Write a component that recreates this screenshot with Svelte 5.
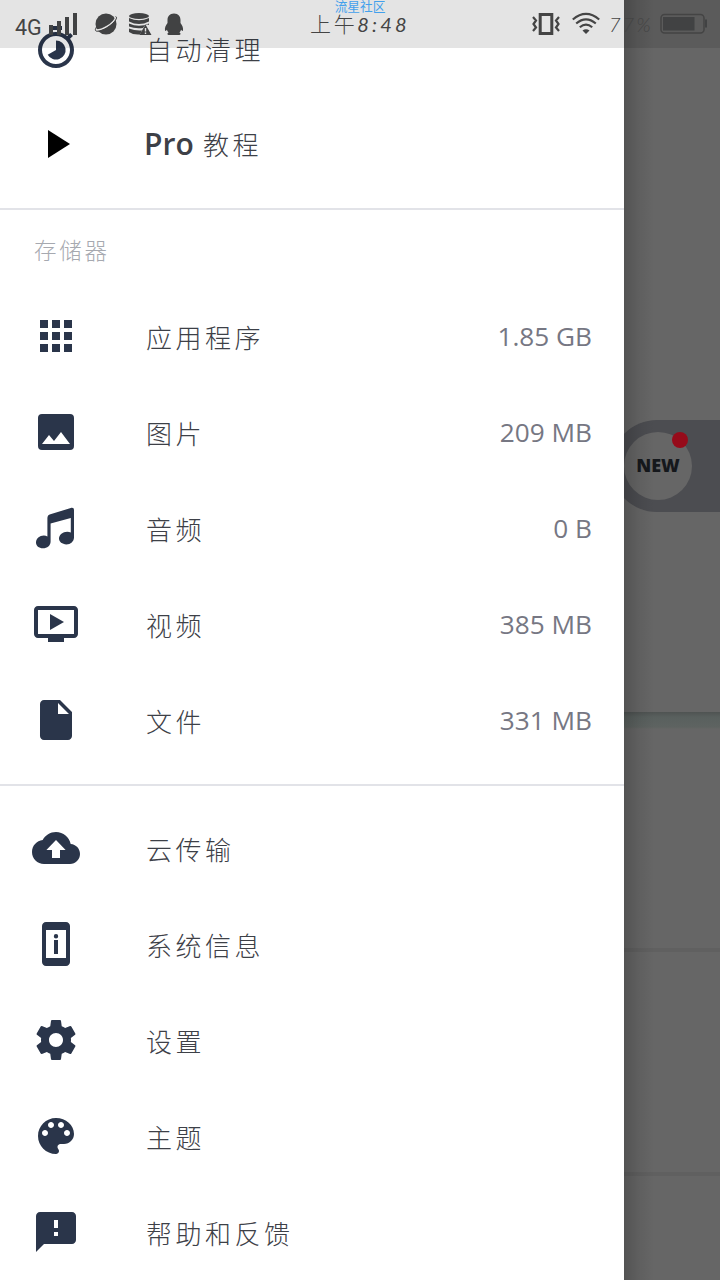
<script>
  const storage = [
    { icon: 'apps', label: '应用程序', value: '1.85 GB' },
    { icon: 'image', label: '图片', value: '209 MB' },
    { icon: 'music', label: '音频', value: '0 B' },
    { icon: 'video', label: '视频', value: '385 MB' },
    { icon: 'file', label: '文件', value: '331 MB' }
  ];
  const more = [
    { icon: 'cloud', label: '云传输' },
    { icon: 'info', label: '系统信息' },
    { icon: 'settings', label: '设置' },
    { icon: 'palette', label: '主题' },
    { icon: 'feedback', label: '帮助和反馈' }
  ];
  const paths = {
    timer: 'M15 1H9v2h6V1zm4.03 6.39l1.42-1.42c-.43-.51-.9-.99-1.41-1.41l-1.42 1.42C16.07 4.74 14.12 4 12 4c-4.97 0-9 4.03-9 9s4.02 9 9 9 9-4.03 9-9c0-2.12-.74-4.07-1.97-5.61zM12 20c-3.87 0-7-3.13-7-7s3.13-7 7-7 7 3.13 7 7-3.13 7-7 7zM12 8.2V13l-4.150 2.400A4.800 4.800 0 1 0 12 8.200z',
    play: 'M8 5v14l11-7z',
    apps: 'M4 8h4V4H4v4zm6 12h4v-4h-4v4zm-6 0h4v-4H4v4zm0-6h4v-4H4v4zm6 0h4v-4h-4v4zm6-10v4h4V4h-4zm-6 4h4V4h-4v4zm6 6h4v-4h-4v4zm0 6h4v-4h-4v4z',
    image: 'M5 3h14a2 2 0 0 1 2 2v14a2 2 0 0 1-2 2H5a2 2 0 0 1-2-2V5a2 2 0 0 1 2-2zM5 18h14l-4.500-6-3.500 4.500L8.500 13.500z',
    music: 'M21 3v13.600c0 2.100-1.700 3.600-3.800 3.600-2.100 0-3.700-1.200-3.700-2.900 0-1.900 1.900-3.400 4.100-3.400.7 0 1.300.1 1.800.4V7L9.300 9.700v9c0 2-1.700 3.400-3.800 3.400S2 20.900 2 19.200c0-1.900 1.800-3.400 3.900-3.400.7 0 1.300.1 1.800.4V7c0-1 .5-1.600 1.500-1.900l10.200-3.100c1-.3 1.600.1 1.600 1z',
    video: 'M21 3H3c-1.110 0-2 .89-2 2v12c0 1.100.89 2 2 2h5v2h8v-2h5c1.100 0 1.990-.9 1.990-2L23 5c0-1.110-.9-2-2-2zm0 14H3V5h18v12zm-5-6l-7 4V7z',
    file: 'M6 2c-1.100 0-1.990.9-1.990 2L4 20c0 1.100.89 2 1.990 2H18c1.100 0 2-.9 2-2V8l-6-6H6zm7 7V3.500L18.500 9H13z',
    cloud: 'M19.350 10.040C18.670 6.590 15.640 4 12 4 9.110 4 6.600 5.640 5.350 8.040 2.340 8.360 0 10.910 0 14c0 3.310 2.690 6 6 6h13c2.760 0 5-2.240 5-5 0-2.640-2.050-4.780-4.650-4.960zM14 13v4h-4v-4H7.200l4.800-5 4.800 5z',
    info: 'M12 7a1.100 1.100 0 1 1 0 2.200A1.100 1.100 0 0 1 12 7zM13 10h-2v7h2zM17 1.010L7 1c-1.100 0-2 .9-2 2v18c0 1.100.9 2 2 2h10c1.100 0 2-.9 2-2V3c0-1.100-.9-1.990-2-1.990zM17 19H7V5h10v14z',
    settings: 'M19.430 12.980c.04-.32.07-.64.07-.98s-.03-.66-.07-.98l2.110-1.650c.19-.15.24-.42.12-.64l-2-3.460c-.12-.22-.39-.3-.61-.22l-2.490 1c-.52-.4-1.080-.73-1.690-.98l-.38-2.650C14.460 2.180 14.250 2 14 2h-4c-.25 0-.46.18-.49.42l-.38 2.650c-.61.25-1.170.59-1.690.98l-2.490-1c-.23-.09-.49 0-.61.22l-2 3.460c-.13.22-.07.49.12.64l2.110 1.650c-.04.32-.07.65-.07.98s.03.66.07.98l-2.110 1.650c-.19.15-.24.42-.12.64l2 3.460c.12.22.39.3.61.22l2.490-1c.52.4 1.080.73 1.690.98l.38 2.650c.03.24.24.42.49.42h4c.25 0 .46-.18.49-.42l.38-2.650c.61-.25 1.170-.59 1.690-.98l2.490 1c.23.09.49 0 .61-.22l2-3.460c.12-.22.07-.49-.12-.64l-2.110-1.650zM12 15.500c-1.930 0-3.500-1.570-3.500-3.500s1.570-3.500 3.500-3.500 3.500 1.570 3.500 3.500-1.570 3.500-3.500 3.500z',
    palette: 'M12 3c-4.970 0-9 4.030-9 9s4.030 9 9 9c.83 0 1.500-.67 1.500-1.500 0-.39-.15-.74-.39-1.010-.23-.26-.38-.61-.38-.99 0-.83.67-1.500 1.500-1.500H16c2.760 0 5-2.240 5-5 0-4.420-4.030-8-9-8zm-5.500 9c-.83 0-1.500-.67-1.500-1.500S5.670 9 6.500 9 8 9.670 8 10.500 7.330 12 6.500 12zm3-4C8.670 8 8 7.330 8 6.500S8.670 5 9.500 5s1.500.67 1.500 1.500S10.330 8 9.500 8zm5 0c-.83 0-1.500-.67-1.500-1.500S13.670 5 14.500 5s1.500.67 1.500 1.500S15.330 8 14.500 8zm3 4c-.83 0-1.500-.67-1.500-1.500S16.670 9 17.500 9s1.500.67 1.500 1.500-.67 1.500-1.500 1.500z',
    feedback: 'M20 2H4c-1.100 0-1.990.9-1.990 2L2 22l4-4h14c1.100 0 2-.9 2-2V4c0-1.100-.9-2-2-2zm-7 12h-2v-2h2v2zm0-4h-2V6h2v4z'
  };
</script>

{#snippet icon(name)}
  <svg class="icon" class:black={name === 'play'} viewBox="0 0 24 24"><path fill-rule="evenodd" d={paths[name]} /></svg>
{/snippet}

{#snippet row(item)}
  <div class="row">
    {@render icon(item.icon)}
    <span class="label">{item.label}</span>
    {#if item.value}<span class="value">{item.value}</span>{/if}
  </div>
{/snippet}

<div class="screen">
  <div class="page">
    <div class="hero">
      <div class="pill"><div class="disc">NEW<i class="dot"></i></div></div>
    </div>
    <div class="card first"></div>
    <div class="card second"></div>
    <div class="card"></div>
  </div>

  <nav class="drawer">
    {@render row({ icon: 'timer', label: '自动清理' })}
    <div class="row">
      {@render icon('play')}
      <span class="label pro"><b>Pro</b> 教程</span>
    </div>
    <hr />
    <div class="heading">存储器</div>
    {#each storage as item}{@render row(item)}{/each}
    <hr class="lower" />
    {#each more as item}{@render row(item)}{/each}
  </nav>

  <header class="status">
    <div class="side left">
      <span class="net">4G</span>
      <svg class="signal" width="28" height="24" viewBox="0 0 28 24"><path d="M0 13h4v10H0zM8 9h4v14H8zM16 5h4v18h-4zM24 1h4v22h-4z" /></svg>
      <svg class="planet" width="24" height="24" viewBox="0 0 24 24"><circle cx="12" cy="12" r="10.500" /><path class="cut" d="M1 18C7 19 20 12 22 5" /><path class="thin" d="M2.500 15c-4 6 3 5 10 1S25 5 21.500 4.600" /></svg>
      <svg class="data" width="24" height="24" viewBox="0 0 24 24"><ellipse cx="11" cy="4" rx="10" ry="3" /><path d="M1 6q10 4.500 20 0v3.500q-10 5-20 0zM1 11.500q10 4.500 20 0V13l-3-1-3 4Q7 17 1 14.500zM1 16.500q6 2.500 13 2l-2 4Q5 23 1 20z" /><path fill-rule="evenodd" d="M17.500 12.500L23.500 23h-12zM16.800 16v3.500h1.400V16zm0 4.500V22h1.400v-1.500z" /></svg>
      <svg class="qq" width="20" height="24" viewBox="0 0 20 24"><path d="M10 1.500c-4.500 0-6.500 3-6.500 6.500V11C1.500 13.500.6 16 1 18.500c.4 1 1.300.2 1.900-.7.300 1.200.9 2 1.700 2.700-1.800.8-1.400 2.500.6 2.500h9.600c2 0 2.400-1.700.6-2.500.8-.7 1.400-1.500 1.700-2.700.6.900 1.500 1.700 1.900.7.400-2.500-.5-5-2.500-7.500V8c0-3.500-2-6.500-6.500-6.500z" /></svg>
    </div>
    <div class="clock">
      <span class="tag">流星社区</span>
      <span class="time">上午<em>8:48</em></span>
    </div>
    <div class="side right">
      <svg width="28" height="24" viewBox="0 0 28 24"><path class="line box" d="M8.200 2.500h11.600v19H8.200z" /><path class="line" d="M1 5l3 3.500L1.500 12 4 15.500 1 19M27 5l-3 3.500 2.500 3.500-2.500 3.500 3 3.500" /></svg>
      <svg class="wifi" width="28" height="24" viewBox="0 0 28 24"><path class="line" d="M.8 7.500Q14-3.700 27.200 7.500M4.200 11.500Q14 3.300 23.800 11.500M7.800 15.300Q14 9.800 20.200 15.300" /><path d="M10.500 18.500q3.500-2.500 7 0L14 22z" /></svg>
      <em class="percent">77%</em>
      <svg class="battery" width="48" height="22" viewBox="0 0 48 22"><rect class="line shell" x="1" y="1.500" width="43" height="18.500" rx="3.500" /><path d="M3 4h31.500v13.500H3zM45 6.500h2v8h-2z" /></svg>
    </div>
  </header>
</div>

<style>
  :global(body) { margin: 0; overflow: hidden; }
  .screen {
    display: grid;
    grid-template: 1280px / 720px;
    width: 720px;
    height: 1280px;
    overflow: hidden;
    background: #666;
    font-family: "Open Sans", "Noto Sans CJK SC", sans-serif;
  }
  .page, .drawer, .status { grid-area: 1 / 1; }
  .page { display: flex; flex-direction: column; }
  .hero {
    box-sizing: border-box;
    height: 712px;
    padding-top: 420px;
  }
  .pill {
    box-sizing: border-box;
    height: 92px;
    margin-left: 611px;
    padding: 12px 13px;
    border-radius: 46px 0 0 46px;
    background: #4c4d51;
  }
  .disc {
    position: relative;
    width: 68px;
    height: 68px;
    border-radius: 50%;
    background: #666;
    color: #15181c;
    font-size: 18px;
    font-weight: 800;
    line-height: 66px;
    text-align: center;
  }
  .dot {
    position: absolute;
    top: 0;
    right: 4px;
    width: 16px;
    height: 16px;
    border-radius: 50%;
    background: #960b1a;
  }
  .card { flex: 1; border-top: 4px solid #606060; }
  .card.first {
    flex: 0 0 236px;
    border: 0;
    background: linear-gradient(#4f5352, #59605e 5px, #5e6361 15px, #666 17px);
  }
  .card.second { flex: 0 0 220px; }
  .drawer {
    position: relative;
    width: 624px;
    background: #fff;
  }
  .drawer::after {
    content: '';
    position: absolute;
    top: 0;
    left: 624px;
    width: 30px;
    height: 1280px;
    background: linear-gradient(90deg, rgba(0,0,0,.19), rgba(0,0,0,.07) 50%, transparent);
  }
  .row {
    box-sizing: border-box;
    display: flex;
    align-items: center;
    height: 96px;
    padding: 0 32px;
  }
  .icon { width: 48px; height: 48px; fill: #2a354a; flex: none; }
  .icon.black { fill: #000; }
  .label {
    flex: 1;
    margin-left: 66px;
    padding-top: 2px;
    color: #3d4047;
    font-family: "Noto Sans CJK SC", sans-serif;
    font-size: 26px;
    font-weight: 300;
    letter-spacing: 3.500px;
    line-height: 40px;
    white-space: nowrap;
  }
  .label.pro { padding-top: 0; }
  .label b {
    margin-left: -2px;
    font-family: "Open Sans", sans-serif;
    font-size: 30px;
    font-weight: 600;
    letter-spacing: 0;
  }
  .value { color: #767783; font-size: 26.200px; line-height: 40px; }
  hr { height: 2px; margin: 16px 0 0; border: 0; background: #e2e3e8; }
  hr.lower { margin-bottom: 14px; }
  .heading {
    box-sizing: border-box;
    height: 78px;
    padding: 19px 34px 0;
    color: #a6a9b0;
    font-family: "Noto Sans CJK SC", sans-serif;
    font-size: 22.500px;
    font-weight: 300;
    letter-spacing: 2.700px;
    line-height: 40px;
  }
  .status {
    position: relative;
    display: grid;
    grid-template-columns: 300px 120px 300px;
    height: 48px;
    background: rgba(0,0,0,.106);
    color: #444;
    fill: #414243;
  }
  .side { display: flex; align-items: center; }
  .left { padding-left: 15px; }
  .net {
    width: 34px;
    padding-top: 7px;
    font-family: Roboto, sans-serif;
    font-size: 21.500px;
    line-height: 24px;
  }
  .signal { margin-bottom: 1px; }
  .planet { margin-left: 17px; }
  .data { margin-left: 10px; }
  .qq { margin-left: 12px; }
  .cut { fill: none; stroke: #e4e4e4; stroke-width: 1.500; }
  .thin { fill: none; stroke: #414243; stroke-width: 1; }
  .clock { display: flex; flex-direction: column; align-items: center; }
  .tag {
    color: #42a0ec;
    font-family: "Noto Sans CJK SC", sans-serif;
    font-size: 12.700px;
    line-height: 12px;
    height: 12px;
  }
  .time {
    font-family: "Noto Sans CJK SC", sans-serif;
    font-size: 21px;
    font-weight: 300;
    letter-spacing: 2.600px;
    line-height: 22px;
    white-space: nowrap;
  }
  .time em, .percent { font-family: Lato, sans-serif; font-size: 20px; font-weight: 400; }
  .time em { letter-spacing: 3.200px; }
  .right { padding-left: 112px; }
  .wifi { margin-left: 12px; }
  .percent { width: 51px; margin-left: 9px; font-weight: 300; letter-spacing: 2px; }
  .line { fill: none; stroke: #444; stroke-width: 2.200; }
  .box { stroke-width: 3; }
  .shell { stroke-width: 1.500; }
</style>
